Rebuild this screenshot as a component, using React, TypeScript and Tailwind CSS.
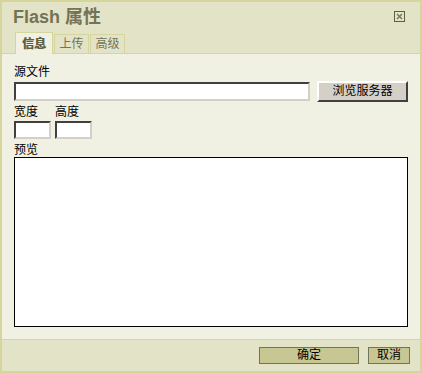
import React from 'react';

const cjk = "font-['Liberation_Sans','Noto_Sans_CJK_SC',sans-serif]";

function CloseIcon() {
  return (
    <svg width="11" height="11" viewBox="0 0 11 11" className="block">
      <rect x="0.5" y="0.5" width="10" height="10" fill="none" stroke="#5f5f45" />
      <path d="M3 3 L8 8 M8 3 L3 8" stroke="#737357" strokeWidth="1.3" />
    </svg>
  );
}

const tabs = [
  { label: '信息', active: true },
  { label: '上传', active: false },
  { label: '高级', active: false },
];

export default function App() {
  return (
    <div
      className={`w-[422px] h-[373px] flex flex-col border-2 border-[#d5d59d] bg-[#f1f1e3] text-[12px] text-black ${cjk}`}
    >
      {/* Title bar with tabs */}
      <div className="h-[52px] flex flex-col bg-[#e3e3c7] border-b border-[#d5d59d]">
        <div className="flex items-start justify-between pl-[11px] pr-[15px] pt-[5px] h-[30px]">
          <div className="text-[18px] leading-[21px] font-bold text-[#737357]">Flash 属性</div>
          <div className="mt-[4px]">
            <CloseIcon />
          </div>
        </div>
        <div className="flex items-end gap-px pl-[13px] h-[21px]">
          {tabs.map((t) =>
            t.active ? (
              <div
                key={t.label}
                className="w-[38px] h-[22px] -mb-px flex items-center justify-center bg-[#f1f1e3] border border-b-0 border-[#d5d59d] font-bold text-[#5f5f45] [text-shadow:0.6px_0_0_#5f5f45]"
              >
                {t.label}
              </div>
            ) : (
              <div
                key={t.label}
                className="w-[35px] h-[19px] flex items-center justify-center bg-[#e3e3c7] border border-b-0 border-[#d5d59d] text-[#737357]"
              >
                {t.label}
              </div>
            )
          )}
        </div>
      </div>

      {/* Body */}
      <div className="flex-1 flex flex-col pl-[12px] pr-[12px] pt-[11px]">
        <div className="leading-[14px]">源文件</div>
        <div className="flex items-center gap-[7px] mt-[2px]">
          <div className="w-[297px] h-[19px] bg-white border-2 border-t-[#404040] border-l-[#404040] border-b-[#d4d0c8] border-r-[#d4d0c8]" />
          <button className="w-[91px] h-[21px] bg-[#d4d0c8] border-2 border-t-white border-l-white border-b-[#404040] border-r-[#404040] leading-[15px] text-black">
            浏览服务器
          </button>
        </div>
        <div className="flex gap-[4px] mt-[3px]">
          <div className="w-[37px]">
            <div className="leading-[14px]">宽度</div>
            <div className="mt-[2px] w-[37px] h-[18px] bg-white border-2 border-t-[#404040] border-l-[#404040] border-b-[#d4d0c8] border-r-[#d4d0c8]" />
          </div>
          <div className="w-[37px]">
            <div className="leading-[14px]">高度</div>
            <div className="mt-[2px] w-[37px] h-[18px] bg-white border-2 border-t-[#404040] border-l-[#404040] border-b-[#d4d0c8] border-r-[#d4d0c8]" />
          </div>
        </div>
        <div className="leading-[14px] mt-[4px]">预览</div>
        <div className="w-[394px] h-[170px] bg-white border border-black" />
      </div>

      {/* Footer */}
      <div className="h-[32px] flex justify-end items-start gap-[9px] pt-[7px] pr-[10px] bg-[#e3e3c7] border-t border-[#d5d59d]">
        <button className="w-[100px] h-[17px] bg-[#c7c794] border border-[#737357] leading-[15px] text-black">
          确定
        </button>
        <button className="w-[42px] h-[17px] bg-[#c7c794] border border-[#737357] leading-[15px] text-black">
          取消
        </button>
      </div>
    </div>
  );
}
